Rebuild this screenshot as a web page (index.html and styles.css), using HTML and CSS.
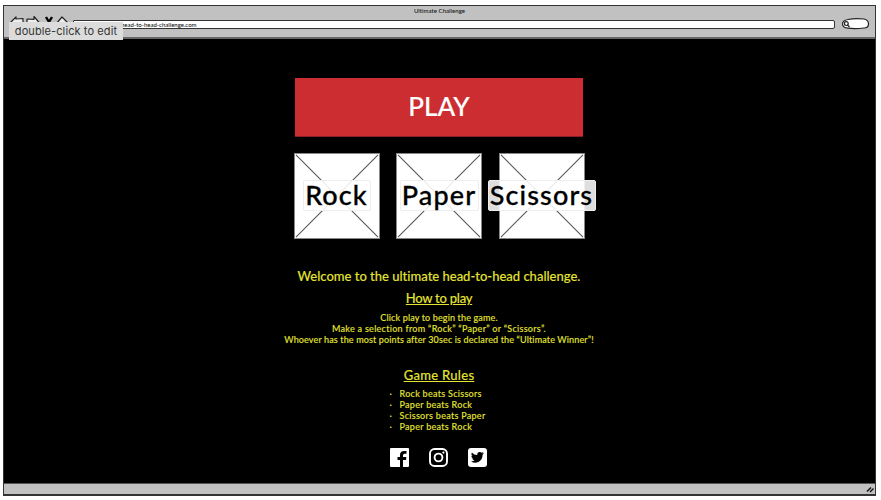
FILE: index.html
```html
<!DOCTYPE html>
<html lang="en">
<head>
<meta charset="utf-8">
<title>Ultimate Challenge</title>
<link rel="stylesheet" href="styles.css">
</head>
<body>
<div class="window">
  <header class="chrome">
    <div class="title"><span>Ultimate Challenge</span></div>
    <div class="toolbar">
      <svg class="nav" width="64" height="18" viewBox="0 0 64 18" fill="#eee" stroke="#222" stroke-width="1.2" stroke-linejoin="round">
        <path d="M1 8 7 2v2l7-.5v9H7v2z"/>
        <path d="M18 4l7 .3V1.500l6 7-6 6v-3h-7z"/>
        <path d="M37 2 43 12M43 2 37 12" stroke="#000" stroke-width="2.4"/>
        <path d="M47 9 53 2l6 6-2 1v5h-8V9z"/>
      </svg>
      <div class="address"><span>head-to-head-challenge.com</span></div>
      <svg class="search" width="30" height="14" viewBox="0 0 30 14" fill="#fff" stroke="#222" stroke-width="1.2">
        <path d="M7 2.500Q14 1 23 2 27.500 3 27.500 7T23 11Q14 12.200 7 11.200 1.500 10.500 1.500 7T7 2.500z"/>
        <circle cx="5.300" cy="6.600" r="1.900"/><path d="m6.500 8 2 2"/>
      </svg>
    </div>
    <div class="tooltip">double-click to edit</div>
  </header>
  <main>
    <button class="play"><span>PLAY</span></button>
    <div class="choices">
      <div class="choice"><svg viewBox="0 0 86 86"><path d="M1 1 85 85M85 1 1 85"/></svg><span class="label rock">Rock</span></div>
      <div class="choice"><svg viewBox="0 0 86 86"><path d="M1 1 85 85M85 1 1 85"/></svg><span class="label paper">Paper</span></div>
      <div class="choice"><svg viewBox="0 0 86 86"><path d="M1 1 85 85M85 1 1 85"/></svg><span class="label scissors">Scissors</span></div>
    </div>
    <p class="welcome">Welcome to the ultimate head-to-head challenge.</p>
    <h2 class="how">How to play</h2>
    <div class="steps">
      <p class="s1">Click play to begin the game.</p>
      <p class="s2">Make a selection from “Rock” “Paper” or “Scissors”.</p>
      <p class="s3">Whoever has the most points after 30sec is declared the “Ultimate Winner”!</p>
    </div>
    <h2 class="rules-title">Game Rules</h2>
    <ul class="rules">
      <li>Rock beats Scissors</li>
      <li>Paper beats Rock</li>
      <li>Scissors beats Paper</li>
      <li>Paper beats Rock</li>
    </ul>
    <div class="social">
      <svg viewBox="0 0 19 19"><path fill="#fff" d="M1 0h17q1 0 1 1v17q0 1-1 1h-5v-7h3l.4-3H13V7.200q0-1.500 1.500-1.500h2V3h-2.300Q10 3 10 7v2H7.500v3H10v7H1q-1 0-1-1V1q0-1 1-1z"/></svg>
      <svg viewBox="0 0 19 19" fill="none" stroke="#fff" stroke-width="1.900"><rect x="1" y="1" width="17" height="17" rx="4.500"/><circle cx="9.500" cy="9.500" r="3.900"/><circle cx="14.400" cy="4.600" r="1.100" fill="#fff" stroke="none"/></svg>
      <svg viewBox="0 0 19 19"><rect width="19" height="19" rx="3" fill="#fff"/><path d="M3 13.400q2 .1 3.600-1.100-2-.2-2.500-1.800h1.200Q3.300 9.800 3.300 7.700l1.200.3Q2.600 6.500 3.800 4.400q2.200 2.600 5.500 2.700Q9 4 11.800 3.900q1.200 0 2 .9l1.700-.7-1.100 1.500 1.600-.4-1.400 1.500q0 5.200-4.300 7.300Q6.500 15.500 3 13.400z"/></svg>
    </div>
  </main>
  <footer class="status">
    <svg width="8" height="7" viewBox="0 0 8 7" stroke="#111" stroke-width="1.400"><path d="M1 5.500 5 1.500M4 6 7.500 2.500"/></svg>
  </footer>
</div>
</body>
</html>
```
FILE: styles.css
```css
* { box-sizing: border-box; }
body { margin: 0; padding: 5px 5px 4px 3px; height: 500px; background: #fff; overflow: hidden; font-family: Lato, sans-serif; font-weight: 500; font-variant-ligatures: none; }
p, h2, ul { margin: 0; padding: 0; font-weight: 500; }
.window { width: 873px; height: 491px; display: flex; flex-direction: column; background: #000; border: 1px solid #333; }
.chrome { position: relative; height: 33px; flex: none; background: #c1c1c1; border-bottom: 2px solid #666; }
.title { height: 11px; line-height: 10px; text-align: center; font-size: 6px; letter-spacing: 0.05px; color: #111; }
.toolbar { display: flex; align-items: center; height: 14px; padding: 0 4px 0 5px; }
.nav { flex: none; }
.address { flex: 1; height: 9px; margin: 0 6px 0 0; padding-left: 47px; background: #fff; border: 1px solid #333; border-radius: 1px 2px 2px 1px; font-size: 6px; line-height: 7px; color: #111; }
.search { flex: none; }
.tooltip { position: absolute; left: 5px; top: 16px; width: 114px; height: 18px; background: #dcdcdc; color: #333; font: 11px/18px Inter, sans-serif; letter-spacing: 0.1px; text-align: center; white-space: nowrap; }
main { flex: 1; display: flex; flex-direction: column; align-items: center; width: 290px; margin: 0 0 0 290px; padding-top: 39px; color: #e4e432; white-space: nowrap; -webkit-text-stroke: 0.1px currentColor; }
.play { width: 288px; height: 59px; flex: none; border: 0; border-bottom: 1px solid #8c2022; background: #cc2d30; color: #fff; font: 500 26px/56px Lato, sans-serif; padding: 0; -webkit-text-stroke: 0.15px currentColor; }
.play span { position: relative; top: -1px; }
.choices { display: grid; grid-template-columns: repeat(3, 86px); column-gap: 16.500px; margin-top: 16px; flex: none; }
.choice { display: grid; place-items: center; justify-content: center; height: 86px; background: #fff; border: 1px solid #888; }
.choice svg { grid-area: 1 / 1; width: 84px; height: 84px; }
.choice path { stroke: #555; stroke-width: 1.100; }
.label { grid-area: 1 / 1; z-index: 1; justify-self: center; height: 31px; margin-top: -1px; background: rgba(255,255,255,.87); border: 1px solid #eee; border-radius: 2px; color: #000; font: 500 27px/27px Lato, sans-serif; text-align: center; letter-spacing: 1.1px; -webkit-text-stroke: 0.3px currentColor; }
.rock { width: 68px; }
.paper { width: 79px; }
.scissors { width: 108px; margin: -1px -12px 0; }
.welcome { margin-top: 28px; height: 18px; font-size: 13px; line-height: 18px; }
.how, .rules-title { font-size: 13px; height: 16px; line-height: 16px; text-decoration: underline; }
.how { margin-top: 5px; letter-spacing: -0.25px; }
.steps { margin-top: 6px; font-size: 9px; line-height: 11px; text-align: center; display: flex; flex-direction: column; align-items: center; }
.s1 { letter-spacing: 0.14px; }
.s2 { letter-spacing: 0.28px; }
.s3 { letter-spacing: 0.13px; }
.rules-title { margin-top: 22px; letter-spacing: 0.3px; }
.rules { margin-top: 5px; width: 99px; list-style: none; font-size: 9px; line-height: 11px; letter-spacing: 0.28px; }
.rules li { display: flex; }
.rules li::before { content: "·"; width: 10px; flex: none; }
.social { display: flex; gap: 20px; margin: 16px 2px 0 0; }
.social svg { width: 19px; height: 19px; }
.status { height: 12px; flex: none; display: flex; justify-content: flex-end; align-items: center; padding-right: 1px; background: #c1c1c1; border-top: 1px solid #555; border-bottom: 1px solid #333; }
```
